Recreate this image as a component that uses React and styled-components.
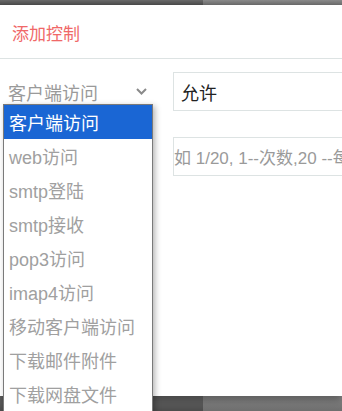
import React from "react";
import styled, { createGlobalStyle } from "styled-components";

const GlobalStyle = createGlobalStyle`
  html, body {
    margin: 0;
    padding: 0;
    overflow: hidden;
    background: #5c5c5c;
  }
  * {
    box-sizing: border-box;
  }
`;

const Page = styled.div`
  position: relative;
  width: 342px;
  height: 411px;
  display: flex;
  flex-direction: column;
  font-family: "Liberation Sans", "Noto Sans CJK SC", sans-serif;
  overflow: hidden;
`;

const Backdrop = styled.div`
  height: ${({ h }) => h}px;
  display: flex;
  flex-shrink: 0;
`;

const BackdropPart = styled.div`
  flex: ${({ grow }) => grow};
  background: ${({ light }) =>
    light
      ? "linear-gradient(#8a8a8a, #6e6e6e)"
      : "linear-gradient(#6a6a6a, #4c4c4c)"};
`;

const Dialog = styled.div`
  flex: 1;
  background: #fff;
  display: flex;
  flex-direction: column;
  box-shadow: 0 4px 8px rgba(0, 0, 0, 0.35);
  position: relative;
  z-index: 1;
`;

const Header = styled.div`
  height: 54px;
  display: flex;
  align-items: center;
  padding: 2px 0 0 12px;
  border-bottom: 1px solid #dde3e3;
  color: #f06868;
  font-size: 17px;
`;

const Form = styled.div`
  display: flex;
  gap: 13px;
  padding: 13px 0 0 0;
`;

const SelectBox = styled.div`
  width: 160px;
  height: 39px;
  display: flex;
  align-items: center;
  justify-content: space-between;
  padding: 0 13px 0 8px;
  color: #9a9a9a;
  font-size: 18px;
  flex-shrink: 0;
`;

const Fields = styled.div`
  flex: 1;
  display: flex;
  flex-direction: column;
  gap: 26px;
`;

const Input = styled.div`
  height: 39px;
  width: 200px;
  border: 1px solid #dde3e3;
  border-right: none;
  display: flex;
  align-items: center;
  padding-left: ${({ placeholder }) => (placeholder ? "0" : "7px")};
  font-size: ${({ placeholder }) => (placeholder ? "17px" : "18px")};
  color: ${({ placeholder }) => (placeholder ? "#9a9a9a" : "#222")};
  white-space: nowrap;
  overflow: hidden;
`;

const Menu = styled.ul`
  position: absolute;
  left: 3px;
  top: 104px;
  width: 150px;
  margin: 0;
  padding: 0;
  list-style: none;
  background: #fff;
  border: 1px solid #7a7a7a;
  box-shadow: 2px 2px 6px rgba(0, 0, 0, 0.3);
  z-index: 5;
`;

const MenuItem = styled.li`
  height: 34px;
  display: flex;
  align-items: center;
  padding-left: 5px;
  font-size: 18px;
  color: ${({ active }) => (active ? "#fff" : "#a0a0a0")};
  background: ${({ active }) => (active ? "#1a66d4" : "transparent")};
  white-space: nowrap;
`;

const items = [
  "客户端访问",
  "web访问",
  "smtp登陆",
  "smtp接收",
  "pop3访问",
  "imap4访问",
  "移动客户端访问",
  "下载邮件附件",
  "下载网盘文件",
];

const Chevron = () => (
  <svg width="11" height="7" viewBox="0 0 11 7" fill="none">
    <path d="M1 1L5.5 5.5L10 1" stroke="#8a8a8a" strokeWidth="2" />
  </svg>
);

const App = () => {
  return (
    <Page>
      <GlobalStyle />
      <Backdrop h={5}>
        <BackdropPart grow={203} />
        <BackdropPart grow={139} light />
      </Backdrop>
      <Dialog>
        <Header>添加控制</Header>
        <Form>
          <SelectBox>
            客户端访问
            <Chevron />
          </SelectBox>
          <Fields>
            <Input>允许</Input>
            <Input placeholder>如 1/20, 1--次数,20 --每分钟</Input>
          </Fields>
        </Form>
      </Dialog>
      <Backdrop h={15}>
        <BackdropPart grow={203} />
        <BackdropPart grow={139} light />
      </Backdrop>
      <Menu>
        {items.map((item, i) => (
          <MenuItem key={item} active={i === 0}>
            {item}
          </MenuItem>
        ))}
      </Menu>
    </Page>
  );
};

export default App;
